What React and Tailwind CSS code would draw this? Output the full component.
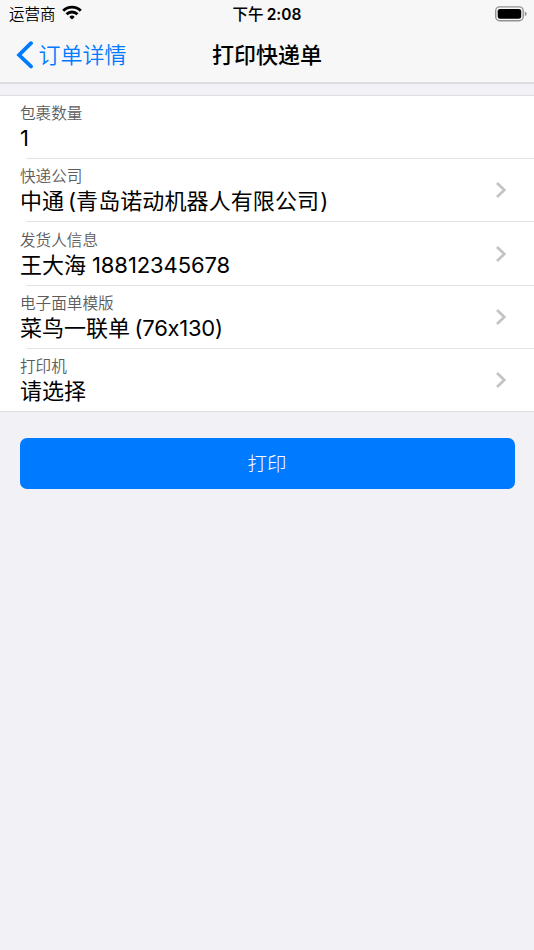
const rows = [
  { label: "包裹数量", value: [["1", ""]], height: "h-[63px]" },
  { label: "快递公司", value: [["中通", ""], ["(", "ml-[4px]"], ["青岛诺动机器人有限公司", "tracking-[0.1px]"], [")", "ml-[1px]"]], arrow: true, height: "h-[63px]" },
  { label: "发货人信息", value: [["王大海", ""], ["18812345678", "ml-[6px] tracking-[-0.1px]"]], arrow: true, height: "h-[64px]" },
  { label: "电子面单模版", value: [["菜鸟一联单", ""], ["(76x130)", "ml-[4.5px] tracking-[-0.25px]"]], arrow: true, height: "h-[63px]" },
  { label: "打印机", value: [["请选择", ""]], arrow: true, height: "h-[63px]" },
];

function Wifi() {
  return (
    <svg className="mb-[4px] ml-[6px] h-[15px] w-[20px]" viewBox="0 0 20 15" fill="none" stroke="#000" strokeWidth="2.9">
      <path d="M1.2 5.7A12.6 12.6 0 0 1 18.8 5.7" />
      <path d="M4.5 9.2A7.9 7.9 0 0 1 15.5 9.2" />
      <path d="M10 14.6L7.3 11.9A3.9 3.9 0 0 1 12.7 11.9Z" fill="#000" stroke="none" />
    </svg>
  );
}

function Battery() {
  return (
    <svg className="mb-[2px] h-[16px] w-[34px]" viewBox="0 0 34 16">
      <rect x="0.7" y="0.9" width="27.5" height="13.8" rx="4" fill="none" stroke="#929292" strokeWidth="1.4" />
      <rect x="2.7" y="2.9" width="23.5" height="9.8" rx="2.3" fill="#000" />
      <path d="M29.8 5.4Q31.7 6 31.7 7.8Q31.7 9.6 29.8 10.2Z" fill="#929292" />
    </svg>
  );
}

export default function App() {
  return (
    <div className="h-[950px] w-[534px] overflow-hidden bg-[#f2f1f6] font-['Inter','Noto_Sans_CJK_SC',sans-serif] text-black [font-feature-settings:'calt'_0]">
      <header className="h-[84px] border-b-2 border-[#dedee2] bg-[#f7f7f7]">
        <div className="grid h-[28px] grid-cols-3 items-center text-[15.5px] leading-[28px]">
          <div className="flex items-center pl-[9px]">
            <span className="pt-px font-[350]">运营商</span>
            <Wifi />
          </div>
          <div className="flex justify-center pt-px">
            <span className="font-medium">下午</span>
            <span className="ml-[3px] font-semibold">2:08</span>
          </div>
          <div className="flex justify-end pr-[5px]">
            <Battery />
          </div>
        </div>
        <div className="grid h-[54px] grid-cols-3 items-center text-[22px] leading-[54px]">
          <div className="flex items-center pl-[16px] text-[#007aff]">
            <svg className="h-[28px] w-[18px]" viewBox="0 0 18 28" fill="none" stroke="currentColor" strokeWidth="3.8" strokeLinecap="round">
              <path d="M15 2.2L3.1 14L15 25.4" />
            </svg>
            <span className="ml-[4.5px] font-[350]">订单详情</span>
          </div>
          <h1 className="text-center font-medium whitespace-nowrap">打印快递单</h1>
        </div>
      </header>

      <section className="mt-[11px] border-t border-[#dedee2] bg-white">
        {rows.map((row, i) => (
          <div key={row.label} className={`${row.height} flex flex-col`}>
            <div className="flex flex-1 items-center justify-between pr-[27px] pl-[20px]">
              <div className="pt-px">
                <div className="pt-px text-[15.6px] leading-[22px] font-[350] text-[#5c5c5c]">{row.label}</div>
                <div className="flex text-[22px] leading-[26px] font-normal">
                  {row.value.map(([text, gap]) => (
                    <span key={text} className={gap}>{text}</span>
                  ))}
                </div>
                <div className="h-[2px]" />
              </div>
              {row.arrow && (
                <svg className="h-[18px] w-[12px]" viewBox="0 0 12 18" fill="none" stroke="#c4c4c6" strokeWidth="2.7">
                  <path d="M2 2L9.3 9L2 16" />
                </svg>
              )}
            </div>
            <div className={i === rows.length - 1 ? "h-px bg-[#dedee2]" : "ml-[26px] h-px bg-[#e3e3e5]"} />
          </div>
        ))}
      </section>

      <button className="mx-[19.5px] mt-[25.5px] block h-[51.5px] w-[495px] rounded-[7px] bg-[#007aff] pt-[2px] text-[19.5px] font-light text-white">
        打印
      </button>
    </div>
  );
}
